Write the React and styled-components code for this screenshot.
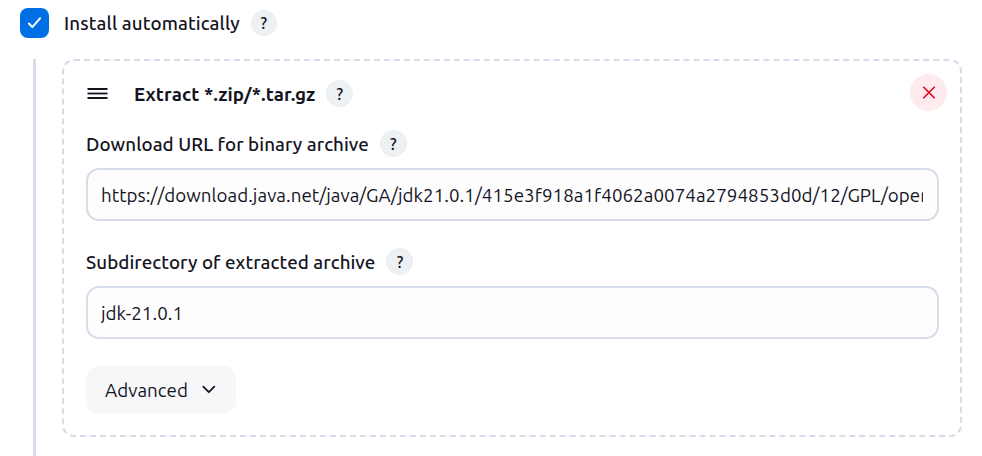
import React from "react";
import styled, { createGlobalStyle } from "styled-components";

const GlobalStyle = createGlobalStyle`
  *, *::before, *::after { box-sizing: border-box; }
  body {
    margin: 0;
    background: #fff;
    color: #14141f;
    font-family: Ubuntu, "Noto Sans", sans-serif;
    font-size: 18.75px;
    line-height: 26px;
    overflow: hidden;
  }
`;

const Page = styled.main`
  height: 456px;
  padding: 8px 20px 0;
  overflow: hidden;
`;

const CheckRow = styled.div`
  display: flex;
  align-items: center;
  height: 30px;
`;

const Checkbox = styled.span`
  display: grid;
  place-items: center;
  width: 29px;
  height: 30px;
  margin-right: 15px;
  border-radius: 8px;
  background: #006fe6;
`;

const Label = styled.span`
  padding-top: ${(p) => p.$drop ?? 2}px;
  font-weight: ${(p) => p.$weight || 500};
  letter-spacing: ${(p) => p.$spacing ?? 0.07}px;
  white-space: nowrap;
`;

const Help = styled.span`
  display: grid;
  place-items: center;
  flex: none;
  width: ${(p) => p.$size || 27}px;
  height: ${(p) => p.$size || 27}px;
  margin-left: 11px;
  border: 1px solid #e8ecf0;
  border-radius: 50%;
  background: #eef1f4;
  font-size: 16px;
  font-weight: 500;
  line-height: 20px;
`;

const Nested = styled.section`
  height: 420px;
  margin: 21px 0 0 13px;
  padding-left: 26px;
  border-left: 3px solid #d6dde8;
`;

const Installer = styled.div`
  width: 900px;
  height: 378px;
  padding: 13px 13px 0 22px;
  border: 2px dashed #d6dde8;
  border-radius: 12px;
`;

const Header = styled.div`
  display: flex;
  align-items: center;
  justify-content: space-between;
  height: 37px;
`;

const HeaderTitle = styled.div`
  display: flex;
  align-items: center;
  height: 37px;
  padding-top: 2px;
`;

const DragHandle = styled.svg`
  flex: none;
  width: 22px;
  height: 15px;
  margin-right: 26px;
`;

const RemoveButton = styled.button`
  display: grid;
  place-items: center;
  width: 37px;
  height: 37px;
  padding: 0;
  border: 0;
  border-radius: 50%;
  background: #fdebed;
`;

const Field = styled.div`
  width: 853px;
  margin-top: ${(p) => p.$top}px;
`;

const FieldLabel = styled.div`
  display: flex;
  align-items: center;
  height: 27px;
  margin-bottom: 11px;
`;

const Input = styled.div`
  height: 53px;
  padding: 0 14px 0 13px;
  border: 2px solid #d6dce8;
  border-radius: 13px;
  background: #fdfdfe;
`;

const Value = styled.div`
  height: 49px;
  line-height: 51px;
  letter-spacing: 0.045px;
  white-space: nowrap;
  overflow: hidden;
`;

const AdvancedButton = styled.button`
  display: flex;
  align-items: center;
  gap: 14px;
  width: 150px;
  height: 48px;
  margin-top: 27px;
  padding: 0 0 0 19px;
  border: 0;
  border-radius: 13px;
  background: #f7f7fa;
  color: inherit;
  font: inherit;
`;

export default function App() {
  return (
    <>
      <GlobalStyle />
      <Page>
        <CheckRow>
          <Checkbox role="checkbox" aria-checked="true">
            <svg width="15" height="13" viewBox="0 0 15 13" fill="none">
              <path d="M1.9 6.5 5.3 10.1 13 1.3" stroke="#fff" strokeWidth="2" strokeLinecap="round" strokeLinejoin="round" />
            </svg>
          </Checkbox>
          <Label $drop={1} $spacing={0.13}>Install automatically</Label>
          <Help $size={26}>?</Help>
        </CheckRow>
        <Nested>
          <Installer>
            <Header>
              <HeaderTitle>
                <DragHandle viewBox="0 0 22 15" stroke="#14141f">
                  <path d="M1.5 3h20M1.5 12h20" strokeWidth="2" />
                  <path d="M1.5 7.5h20" strokeWidth="1.8" />
                </DragHandle>
                <Label $weight={700} $spacing={0.09}>Extract *.zip/*.tar.gz</Label>
                <Help>?</Help>
              </HeaderTitle>
              <RemoveButton aria-label="Remove installer">
                <svg width="14" height="14" viewBox="0 0 14 14">
                  <path d="M1.3 .8 12.7 12.2M12.7 .8 1.3 12.2" stroke="#e6001f" strokeWidth="1.6" />
                </svg>
              </RemoveButton>
            </Header>
            <Field $top={19}>
              <FieldLabel>
                <Label>Download URL for binary archive</Label>
                <Help>?</Help>
              </FieldLabel>
              <Input>
                <Value>https://download.java.net/java/GA/jdk21.0.1/415e3f918a1f4062a0074a2794853d0d/12/GPL/open</Value>
              </Input>
            </Field>
            <Field $top={27}>
              <FieldLabel>
                <Label>Subdirectory of extracted archive</Label>
                <Help>?</Help>
              </FieldLabel>
              <Input>
                <Value>jdk-21.0.1</Value>
              </Input>
            </Field>
            <AdvancedButton>
              <Label $drop={1} $weight={400} $spacing={0.04}>Advanced</Label>
              <svg width="14" height="10" viewBox="0 0 14 10" fill="none">
                <path d="m1.3 1.7 5.5 5.5 5.5-5.5" stroke="#14141f" strokeWidth="1.8" strokeLinecap="round" strokeLinejoin="round" />
              </svg>
            </AdvancedButton>
          </Installer>
        </Nested>
      </Page>
    </>
  );
}
